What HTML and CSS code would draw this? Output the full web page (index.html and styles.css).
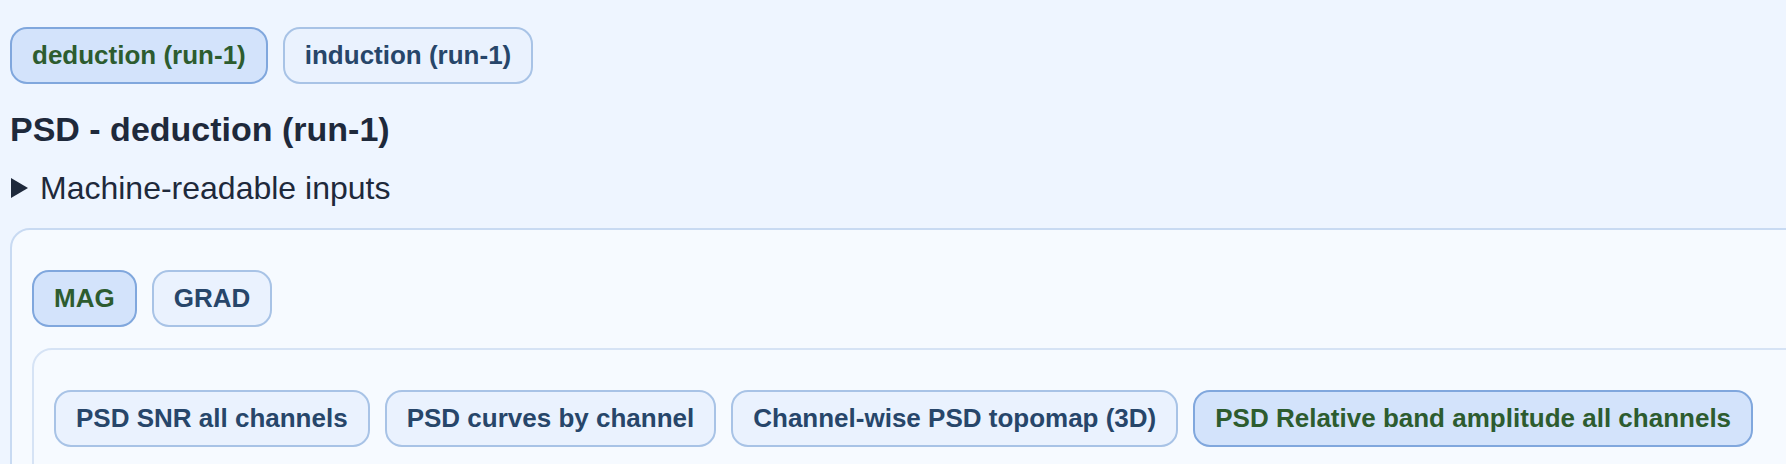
FILE: index.html
```html
<!DOCTYPE html>
<html lang="en">
<head>
<meta charset="utf-8">
<title>PSD - deduction (run-1)</title>
<link rel="stylesheet" href="styles.css">
</head>
<body>
<div class="page">
  <div class="tab-row run-tabs">
    <button class="tab active">deduction (run-1)</button>
    <button class="tab">induction (run-1)</button>
  </div>
  <h2 class="title">PSD - deduction (run-1)</h2>
  <details class="inputs">
    <summary><span class="marker"></span>Machine-readable inputs</summary>
  </details>
  <section class="card outer">
    <div class="tab-row">
      <button class="tab active">MAG</button>
      <button class="tab">GRAD</button>
    </div>
    <section class="card inner">
      <div class="tab-row">
        <button class="tab">PSD SNR all channels</button>
        <button class="tab">PSD curves by channel</button>
        <button class="tab">Channel-wise PSD topomap (3D)</button>
        <button class="tab active">PSD Relative band amplitude all channels</button>
      </div>
    </section>
  </section>
</div>
</body>
</html>
```
FILE: styles.css
```css
html, body {
  margin: 0;
  padding: 0;
  background: #eef5ff;
}

body {
  font-family: "Liberation Sans", Arial, Helvetica, sans-serif;
  color: #1e293b;
  height: 464px;
  overflow: hidden;
}

.page {
  padding: 27px 0 0 10px;
  overflow: hidden;
}

.tab-row {
  display: flex;
  flex-wrap: nowrap;
  gap: 15px;
}

.tab {
  font-family: inherit;
  font-size: 26px;
  font-weight: 700;
  line-height: 31px;
  padding: 11px 20px;
  border: 2px solid #a8c3e6;
  border-radius: 17px;
  background: #eaf2fe;
  color: #27466a;
  white-space: nowrap;
  cursor: pointer;
  margin: 0;
}

.tab.active {
  background: #d3e3fb;
  border-color: #80a7dd;
  color: #2d5c2f;
}

.title {
  margin: 26px 0 0;
  font-size: 34px;
  font-weight: 700;
  line-height: 39px;
  color: #1e293b;
}

.inputs {
  margin-top: 21px;
}

.inputs summary {
  list-style: none;
  font-size: 32px;
  line-height: 37px;
  color: #1e293b;
  cursor: pointer;
}

.inputs summary::-webkit-details-marker {
  display: none;
}

.marker {
  display: inline-block;
  width: 0;
  height: 0;
  border-left: 17px solid #1e293b;
  border-top: 10px solid transparent;
  border-bottom: 10px solid transparent;
  margin: 0 12px 1px 1px;
}

.card {
  border: 2px solid #c8daf2;
  border-radius: 20px;
  background: #f6faff;
  padding: 40px 20px 20px;
}

.outer {
  margin-top: 21px;
  margin-right: -80px;
}

.inner {
  margin-top: 21px;
  border-color: #d6e3f5;
  padding-bottom: 40px;
}
```
